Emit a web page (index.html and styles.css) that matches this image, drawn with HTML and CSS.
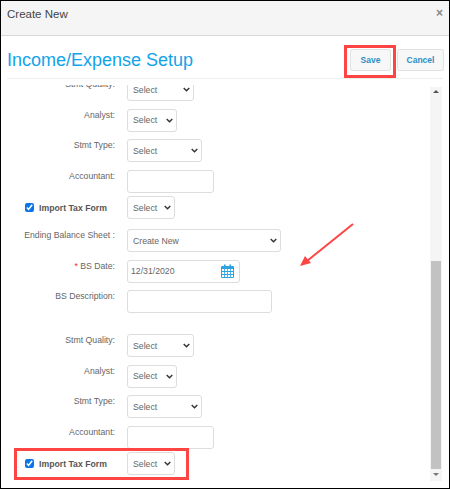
FILE: index.html
```html
<!DOCTYPE html>
<html lang="en">
<head>
<meta charset="utf-8">
<title>Create New</title>
<link rel="stylesheet" href="styles.css">
</head>
<body>
<div class="dialog">
  <header class="dialog-head">
    <span class="dialog-title">Create New</span>
    <span class="dialog-close">×</span>
  </header>
  <div class="setup">
    <div class="setup-bar">
      <h1 class="setup-title">Income/Expense Setup</h1>
      <div class="setup-actions">
        <button class="btn btn-save">Save</button>
        <button class="btn btn-cancel">Cancel</button>
      </div>
    </div>
    <div class="scroll">
      <form class="form">
        <div class="row row-first"><label class="lbl">Stmt Quality:</label><select class="ctl sel w-quality"><option>Select</option></select></div>
        <div class="row"><label class="lbl">Analyst:</label><select class="ctl sel w-analyst"><option>Select</option></select></div>
        <div class="row"><label class="lbl">Stmt Type:</label><select class="ctl sel w-type"><option>Select</option></select></div>
        <div class="row"><label class="lbl">Accountant:</label><input class="ctl w-acct" type="text"></div>
        <div class="row row-check"><label class="lbl lbl-check"><input class="chk" type="checkbox" checked>Import Tax Form</label><select class="ctl sel w-import"><option>Select</option></select></div>
        <div class="row row-ending"><label class="lbl">Ending Balance Sheet :</label><select class="ctl sel w-ending"><option>Create New</option></select></div>
        <div class="row"><label class="lbl"><span class="req">*</span> BS Date:</label>
          <div class="ctl w-date date-field"><span>12/31/2020</span>
            <svg class="cal" width="13" height="14" viewBox="0 0 13 14"><path fill="#2ea3e3" d="M1 2h2V0.6h1.6V2h3.8V0.6H10V2h2a1 1 0 0 1 1 1v10a1 1 0 0 1-1 1H1a1 1 0 0 1-1-1V3a1 1 0 0 1 1-1z"/><path fill="#fff" d="M1 5h2.2v2H1zM4 5h2.2v2H4zM7 5h2.2v2H7zM10 5h2v2h-2zM1 8h2.2v2H1zM4 8h2.2v2H4zM7 8h2.2v2H7zM10 8h2v2h-2zM1 11h2.2v2H1zM4 11h2.2v2H4zM7 11h2.2v2H7zM10 11h2v2h-2z"/></svg>
          </div></div>
        <div class="row"><label class="lbl">BS Description:</label><input class="ctl w-desc" type="text"></div>
        <div class="row row-gap"><label class="lbl">Stmt Quality:</label><select class="ctl sel w-quality"><option>Select</option></select></div>
        <div class="row"><label class="lbl">Analyst:</label><select class="ctl sel w-analyst"><option>Select</option></select></div>
        <div class="row"><label class="lbl">Stmt Type:</label><select class="ctl sel w-type"><option>Select</option></select></div>
        <div class="row"><label class="lbl">Accountant:</label><input class="ctl w-acct" type="text"></div>
        <div class="row row-check"><label class="lbl lbl-check"><input class="chk" type="checkbox" checked>Import Tax Form</label><select class="ctl sel w-import"><option>Select</option></select></div>
      </form>
      <div class="scrollbar">
        <span class="sb-up"></span>
        <span class="sb-track"><span class="sb-thumb"></span></span>
        <span class="sb-down"></span>
      </div>
    </div>
  </div>
</div>
<div class="mark mark-save"></div>
<div class="mark mark-import"></div>
<svg class="arrow" width="60" height="50" viewBox="0 0 60 50">
  <path d="M55 3 L9 40" stroke="#f44" stroke-width="2" fill="none"/>
  <path d="M2 45 L7 35 L13 42 Z" fill="#f44"/>
</svg>
</body>
</html>
```
FILE: styles.css
```css
* { box-sizing: border-box; }
html, body { margin: 0; padding: 0; }
body {
  width: 450px;
  height: 489px;
  overflow: hidden;
  background: #fff;
  font-family: "Liberation Sans", Arial, sans-serif;
  color: #666;
  position: relative;
}
.dialog {
  width: 450px;
  height: 489px;
  border: 1px solid #000;
  display: flex;
  flex-direction: column;
  overflow: hidden;
}
.dialog-head {
  height: 35px;
  flex: none;
  background: #f5f5f5;
  border-bottom: 1px solid #d8d8d8;
  display: flex;
  justify-content: space-between;
  padding: 5px 6px 0 6px;
}
.dialog-title { font-size: 11.5px; line-height: 16px; color: #444; }
.dialog-close { font-size: 12px; line-height: 14px; color: #888; font-weight: bold; }
.setup { flex: 1; min-height: 0; padding: 0 6px; display: flex; flex-direction: column; }
.setup-bar {
  height: 43px;
  flex: none;
  display: flex;
  justify-content: space-between;
  align-items: flex-start;
  border-bottom: 1px solid #eee;
  padding-top: 14px;
}
.setup-title {
  margin: 0;
  font-weight: normal;
  font-size: 18px;
  line-height: 20px;
  color: #12a3ea;
}
.setup-actions { display: flex; gap: 6px; margin-top: -1px; margin-right: -1px; }
.btn {
  height: 22px;
  border: 1px solid #e2e2e2;
  border-radius: 2px;
  background: #f7f7f7;
  color: #2b8fc7;
  font: bold 8.5px "Liberation Sans", Arial, sans-serif;
  padding: 0;
}
.btn-save { width: 41px; }
.btn-cancel { width: 47px; }
.scroll { flex: 1; min-height: 0; display: flex; overflow: hidden; position: relative; margin-top: 6px; }
.form { flex: 1; min-width: 0; margin-top: -23px; }
.row { display: flex; align-items: flex-start; height: 23px; margin-bottom: 7.5px; }
.row-first { margin-top: 16px; }
.row-gap { margin-top: 21px; }
.lbl {
  width: 108px;
  flex: none;
  text-align: right;
  font-size: 8.7px;
  line-height: 12px;
  margin-right: 12px;
  color: #666;
}
.row-check { margin-bottom: 10px; margin-top: -4px; }
.lbl-check {
  display: flex;
  align-items: center;
  justify-content: flex-start;
  padding-left: 18px;
  font-weight: bold;
  font-size: 8.7px;
  height: 23px;
  color: #555;
  white-space: nowrap;
}
.chk { margin: 0 5px 0 0; width: 9px; height: 9px; accent-color: #0a75e8; flex: none; }
.ctl {
  height: 23px;
  border: 1px solid #ddd;
  border-radius: 3px;
  background: #fff;
  font: 8.7px "Liberation Sans", Arial, sans-serif;
  color: #666;
  padding: 0;
  margin: 0;
  flex: none;
}
.sel {
  appearance: none;
  padding-left: 5px;
  background-image: url("data:image/svg+xml,%3Csvg xmlns='http://www.w3.org/2000/svg' width='7' height='5' viewBox='0 0 7 5'%3E%3Cpath d='M.7 1l2.8 2.8L6.3 1' fill='none' stroke='%23333' stroke-width='1.4'/%3E%3C/svg%3E");
  background-repeat: no-repeat;
  background-position: right 3px center;
}
.w-quality { width: 67px; }
.w-analyst { width: 50px; }
.w-type { width: 75px; }
.w-acct { width: 87px; }
.w-import { width: 48px; }
.w-ending { width: 154px; }
.w-date { width: 113px; }
.w-desc { width: 145px; }
.date-field { display: flex; align-items: center; justify-content: space-between; padding: 0 5px 0 3px; }
.cal { flex: none; }
.req { color: #e33; }
.scrollbar {
  position: absolute;
  left: 423px;
  top: 2px;
  width: 12px;
  height: 394px;
  background: #f5f5f5;
  display: flex;
  flex-direction: column;
  align-items: center;
}
.sb-up, .sb-down { height: 12px; width: 12px; flex: none; display: block; position: relative; }
.sb-up::after, .sb-down::after {
  content: "";
  position: absolute;
  left: 3px;
  border-left: 3px solid transparent;
  border-right: 3px solid transparent;
}
.sb-up::after { top: 3px; border-bottom: 3px solid #555; }
.sb-down::after { top: 4px; border-top: 3px solid #777; }
.sb-track { flex: 1; width: 100%; display: flex; flex-direction: column; justify-content: flex-end; padding: 0 1px; }
.sb-thumb { height: 208px; background: #c2c2c2; display: block; }
.mark { position: absolute; border: 3px solid #f44; }
.mark-save { left: 344px; top: 45px; width: 52px; height: 33px; }
.mark-import { left: 14px; top: 448px; width: 175px; height: 32px; }
.arrow { position: absolute; left: 298px; top: 221px; }
```
